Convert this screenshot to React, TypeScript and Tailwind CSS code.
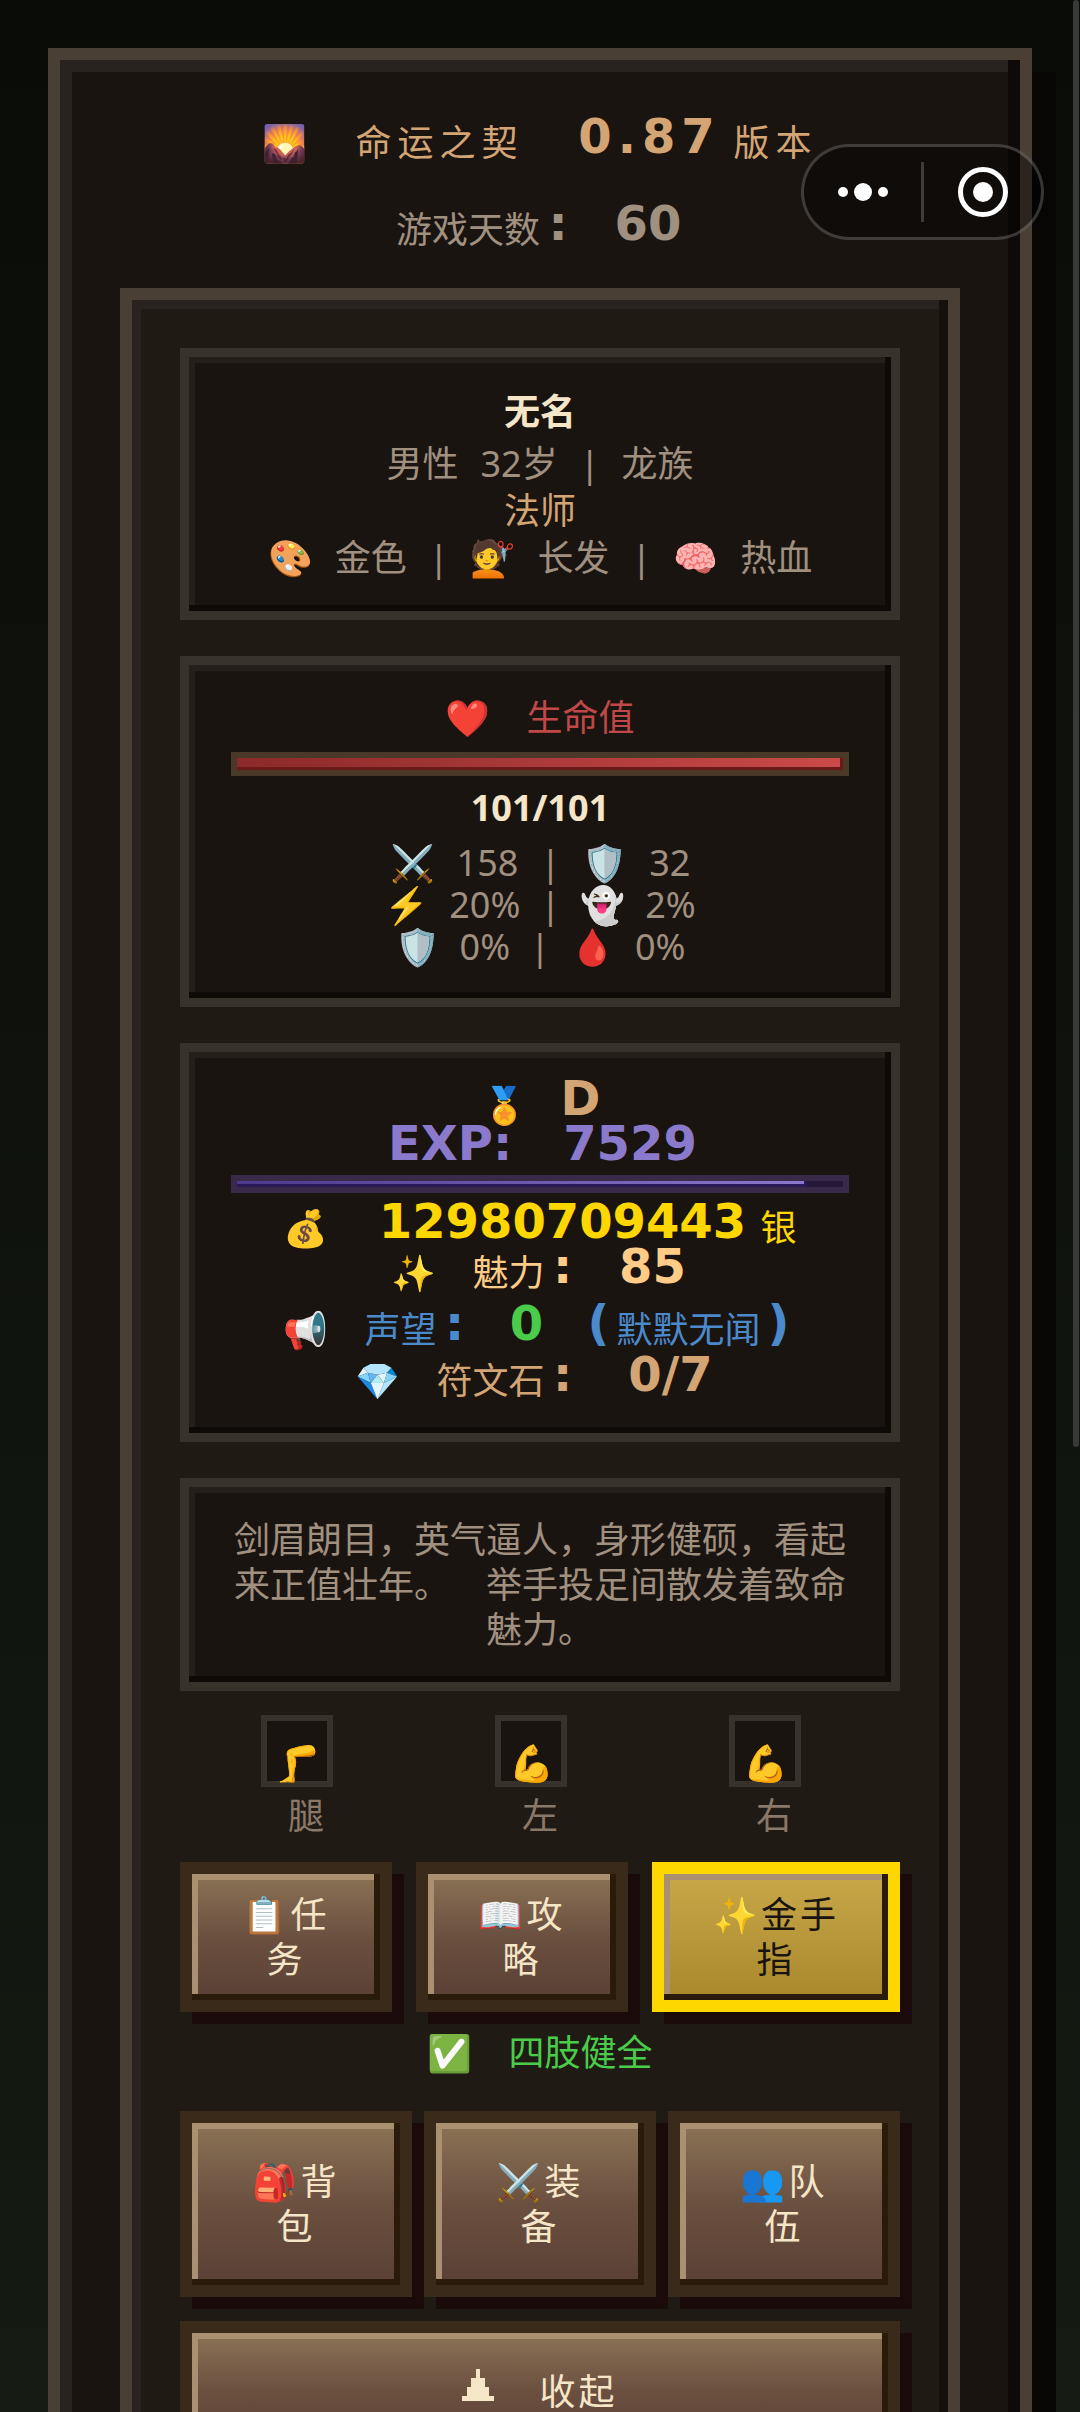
import type { ReactNode } from "react";

/** Display type for numerals and headings; sits slightly above the text baseline. */
function Pixel({ children, className = "" }: { children: ReactNode; className?: string }) {
  return (
    <span className={`inline-flex h-8 shrink-0 justify-center self-start whitespace-nowrap font-['DejaVu_Sans',sans-serif] text-5xl leading-8 font-bold ${className}`}>
      {children}
    </span>
  );
}

function Row({ children, className = "" }: { children: ReactNode; className?: string }) {
  return <div className={`flex justify-center whitespace-nowrap ${className}`}>{children}</div>;
}

function Card({ children }: { children: ReactNode }) {
  return (
    <section className="border-[9px] border-[#38322c] bg-[#1a1410] px-[42px] py-[30px] text-center shadow-[inset_-6px_-6px_0_#0e0a07,inset_6px_6px_0_#241f1a]">
      {children}
    </section>
  );
}

function Bar({ value, kind }: { value: number; kind: "hp" | "exp" }) {
  const hp = kind === "hp";
  return (
    <div className={hp ? "h-6 border-6 border-[#4a3829] bg-[#2a1010]" : "h-[18px] border-6 border-[#3a2a4a] bg-[#251838]"}>
      <div
        className={
          hp
            ? "h-full bg-linear-to-r from-[#8b2a2a] to-[#cc4a4a] shadow-[inset_-3px_-3px_0_#6b1a1a]"
            : "h-full bg-linear-to-r from-[#4a3a8b] to-[#8a7acc] shadow-[inset_-3px_-3px_0_#2a1a5b]"
        }
        style={{ width: `${value}%` }}
      />
    </div>
  );
}

function GameButton({ children, tone = "brown", tall = false }: { children: ReactNode; tone?: "brown" | "gold"; tall?: boolean }) {
  const skin =
    tone === "gold"
      ? "border-[#ffd700] bg-linear-to-b from-[#c9a84a] to-[#a8882a] text-[#1a1410]"
      : "border-[#3a2a1a] bg-linear-to-b from-[#8b7355] via-[#6b5040] to-[#5a4035] text-[#f5e6c8]";
  return (
    <button
      type="button"
      className={`border-12 px-12 tracking-[3px] shadow-[inset_-6px_-6px_0_#2a1a0a,inset_6px_6px_0_#a89070,12px_12px_0_#1a0a0a] ${tall ? "py-9" : "py-[18px]"} ${skin}`}
    >
      {children}
    </button>
  );
}

function Limb({ icon, label }: { icon: string; label: string }) {
  return (
    <div className="flex flex-col items-center">
      <div className="flex size-18 items-end justify-center border-6 border-[#38322c] bg-[#1a1410] leading-9">{icon}</div>
      <div className="mt-1.5 pl-[18px] text-[#8a7868]">{label}</div>
    </div>
  );
}

function Capsule() {
  return (
    <div className="absolute top-36 right-9 flex h-24 w-[243px] items-center rounded-full border-3 border-white/20 bg-black/40">
      <button type="button" aria-label="更多" className="flex h-full flex-1 items-center justify-center">
        <svg width="50" height="20" viewBox="0 0 50 20" fill="#fff">
          <circle cx="5" cy="10" r="5" />
          <circle cx="25" cy="10" r="9" />
          <circle cx="45" cy="10" r="5" />
        </svg>
      </button>
      <div className="h-15 w-[3px] bg-white/20" />
      <button type="button" aria-label="关闭" className="flex h-full flex-1 items-center justify-center">
        <svg width="52" height="52" viewBox="0 0 52 52">
          <circle cx="26" cy="26" r="22.5" fill="none" stroke="#fff" strokeWidth="5" />
          <circle cx="26" cy="26" r="10" fill="#fff" />
        </svg>
      </button>
    </div>
  );
}

export default function App() {
  return (
    <div className="relative h-screen overflow-hidden bg-linear-to-b from-[#0a0c08] to-[#151a13] font-['Noto_Sans','Noto_Sans_CJK_SC',sans-serif] text-4xl leading-[45px] text-[#a09080]">
      <main className="m-12 border-12 border-[#4a3f35] bg-[#1a1410] p-15 shadow-[inset_-12px_-12px_0_#0e0a07,inset_12px_12px_0_#28231e,24px_24px_0_#070605]">
        <h1 className="flex justify-center gap-[42px] whitespace-nowrap tracking-[6px] text-[#d4a574] text-4xl leading-[45px]">
          <span>🌄</span>
          <span>命运之契</span>
          <span className="flex">
            <Pixel className="w-[168px]">0.87</Pixel>
            版本
          </span>
        </h1>
        <Row className="mt-[42px] mb-9">
          游戏天数
          <Pixel className="mr-9 w-9">:</Pixel>
          <Pixel className="w-18">60</Pixel>
        </Row>

        <div className="border-12 border-[#4a3f35] bg-[#1f1a14] p-12 shadow-[inset_-9px_-9px_0_#14100b,inset_9px_9px_0_#28231e]">
          <div className="flex flex-col gap-9">
            <Card>
              <h2 className="mb-[3px] text-4xl leading-[50px] font-bold text-[#f5e6c8]">无名</h2>
              <Row className="gap-[22px] leading-[47px]">
                <span>男性</span>
                <span>32岁</span>
                <span>|</span>
                <span>龙族</span>
              </Row>
              <p className="leading-[47px] text-[#d4a574]">法师</p>
              <Row className="gap-[22px] leading-[47px]">
                <span>🎨</span>
                <span>金色</span>
                <span>|</span>
                <span>💇</span>
                <span>长发</span>
                <span>|</span>
                <span>🧠</span>
                <span>热血</span>
              </Row>
            </Card>

            <Card>
              <Row className="mb-3 gap-9 text-[#c04848]">
                <span>❤️</span>
                <span>生命值</span>
              </Row>
              <Bar value={100} kind="hp" />
              <p className="mt-[9px] mb-3 font-bold text-[#f5e6c8]">101/101</p>
              <div className="leading-[42px]">
                <Row className="gap-[22px]">
                  <span>⚔️</span>
                  <span>158</span>
                  <span>|</span>
                  <span>🛡️</span>
                  <span>32</span>
                </Row>
                <Row className="gap-[20px]">
                  <span>⚡</span>
                  <span>20%</span>
                  <span>|</span>
                  <span>👻</span>
                  <span>2%</span>
                </Row>
                <Row className="gap-[20px]">
                  <span>🛡️</span>
                  <span>0%</span>
                  <span>|</span>
                  <span>🩸</span>
                  <span>0%</span>
                </Row>
              </div>
            </Card>

            <Card>
              <Row className="gap-9 text-[#d4a574]">
                <span>🏅</span>
                <Pixel className="w-9">D</Pixel>
              </Row>
              <Row className="mb-[3px] h-[45px] gap-9 text-[#8a7acc]">
                <Pixel className="w-36">EXP:</Pixel>
                <Pixel className="w-36">7529</Pixel>
              </Row>
              <Bar value={94} kind="exp" />
              <Row className="mt-3 text-[#ffd700]">
                <span className="mr-9">💰</span>
                <Pixel className="w-99">12980709443</Pixel>
                <span>银</span>
              </Row>
              <Row className="text-[#ffcc88]">
                <span className="mr-9">✨</span>
                <span>魅力</span>
                <Pixel className="mr-9 w-9">:</Pixel>
                <Pixel className="w-18">85</Pixel>
              </Row>
              <Row className="mt-3 mb-1.5 text-[#4a8acc]">
                <span className="mr-9">📢</span>
                <span>声望</span>
                <Pixel className="mr-9 w-9">:</Pixel>
                <Pixel className="mr-9 w-9 text-[#4acc4a]">0</Pixel>
                <Pixel className="w-9">(</Pixel>
                <span>默默无闻</span>
                <Pixel className="w-9">)</Pixel>
              </Row>
              <Row className="text-[#d4a574]">
                <span className="mr-9">💎</span>
                <span>符文石</span>
                <Pixel className="mr-9 w-9">:</Pixel>
                <Pixel className="w-27">0/7</Pixel>
              </Row>
            </Card>

            <Card>
              <p className="[text-spacing-trim:space-all]">剑眉朗目，英气逼人，身形健硕，看起来正值壮年。　举手投足间散发着致命魅力。</p>
            </Card>
          </div>

          <div className="my-6 grid grid-cols-3 pr-[18px]">
            <Limb icon="🦵" label="腿" />
            <Limb icon="💪" label="左" />
            <Limb icon="💪" label="右" />
          </div>

          <div className="grid grid-cols-[53fr_53fr_62fr] gap-6">
            <GameButton>📋任务</GameButton>
            <GameButton>📖攻略</GameButton>
            <GameButton tone="gold">✨金手指</GameButton>
          </div>

          <Row className="mt-[18px] mb-9 gap-9 text-[#4acc4a]">
            <span>✅</span>
            <span>四肢健全</span>
          </Row>

          <div className="grid grid-cols-3 gap-3">
            <GameButton tall>🎒背包</GameButton>
            <GameButton tall>⚔️装备</GameButton>
            <GameButton tall>👥队伍</GameButton>
          </div>

          <div className="mt-6 grid">
            <GameButton tall>
              <span className="flex justify-center gap-[45px]">
                <svg width="32" height="32" viewBox="0 0 32 32" fill="currentColor" aria-hidden="true">
                  <path d="M14 0h4v9h5v9h4v9h5v5H0v-5h5v-9h4V9h5z" />
                </svg>
                <span>收起</span>
              </span>
            </GameButton>
          </div>
        </div>
      </main>

      <Capsule />
      <div className="absolute top-0 right-px h-3/5 w-1.5 rounded-full bg-[#373a39]" />
    </div>
  );
}
